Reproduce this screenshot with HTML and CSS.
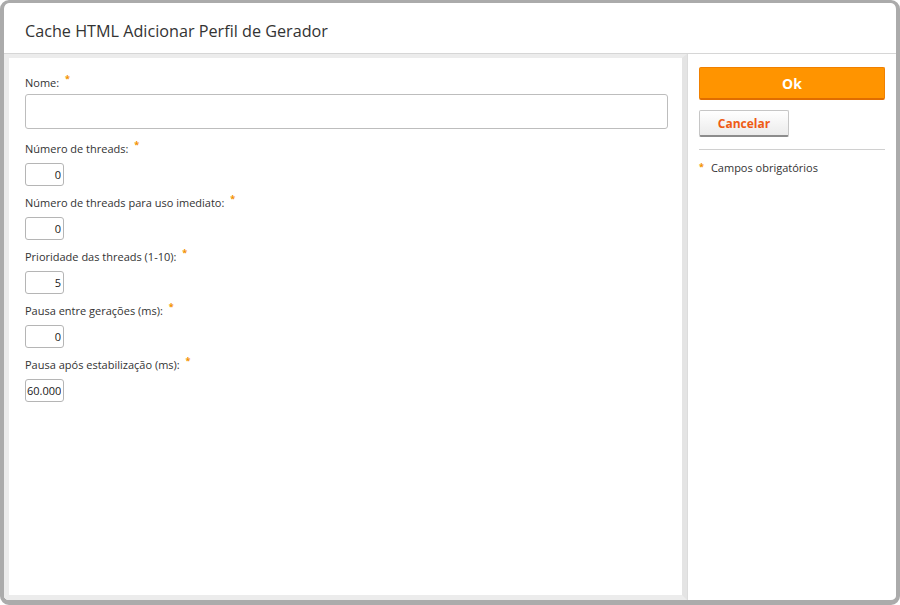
FILE: index.html
```html
<!DOCTYPE html>
<html lang="pt">
<head>
<meta charset="utf-8">
<link rel="stylesheet" href="styles.css">
</head>
<body>
<div class="frame">
  <div class="header">Cache HTML Adicionar Perfil de Gerador</div>
  <div class="main">
    <div class="form-panel">
      <div class="field field-name">
        <label class="lbl">Nome: <span class="req">*</span></label>
        <input class="inp-wide" type="text">
      </div>
      <div class="field">
        <label class="lbl">Número de threads: <span class="req">*</span></label>
        <input class="inp-num" type="text" value="0">
      </div>
      <div class="field">
        <label class="lbl">Número de threads para uso imediato: <span class="req">*</span></label>
        <input class="inp-num" type="text" value="0">
      </div>
      <div class="field">
        <label class="lbl">Prioridade das threads (1-10): <span class="req">*</span></label>
        <input class="inp-num" type="text" value="5">
      </div>
      <div class="field">
        <label class="lbl">Pausa entre gerações (ms): <span class="req">*</span></label>
        <input class="inp-num" type="text" value="0">
      </div>
      <div class="field">
        <label class="lbl">Pausa após estabilização (ms): <span class="req">*</span></label>
        <input class="inp-num" type="text" value="60.000">
      </div>
    </div>
    <div class="side">
      <button class="btn-ok">Ok</button>
      <button class="btn-cancel">Cancelar</button>
      <div class="sep"></div>
      <div class="legend"><span class="req">*</span>Campos obrigatórios</div>
    </div>
  </div>
</div>
</body>
</html>
```
FILE: styles.css
```css
* { box-sizing: border-box; }
html, body { margin: 0; padding: 0; background: #ffffff; }
body { width: 900px; height: 605px; font-family: "Open Sans", "Noto Sans", sans-serif; color: #333; }
.frame {
  width: 900px; height: 605px;
  border: solid #ababab;
  border-width: 3px 4px 5px 4px;
  border-radius: 9px;
  display: flex; flex-direction: column;
  overflow: hidden;
  background: #fff;
}
.header {
  height: 51px;
  padding: 17px 0 0 21px;
  font-size: 16.2px;
  color: #333;
  border-bottom: 1px solid #d6d6d6;
  flex: none;
}
.main { flex: 1; display: flex; min-height: 0; }
.form-panel {
  width: 683px;
  border: solid #ececec;
  border-width: 4px 5px 5px 5px;
  border-right-color: #e4e4e4;
  padding: 17px 14px 0 16px;
}
.side {
  flex: 1;
  border-left: 1px solid #dcdcdc;
  padding: 13px 10px 0 11px;
  display: flex; flex-direction: column; align-items: flex-start;
}
.field { display: flex; flex-direction: column; align-items: flex-start; margin-bottom: 9px; }
.field-name { margin-bottom: 12px; }
.lbl { font-size: 11px; line-height: 16px; margin-bottom: 5px; color: #333; }
.field-name .lbl { margin-bottom: 2px; }
.req { color: #f39200; font-size: 9px; position: relative; top: -5px; margin-left: 3px; font-weight: bold; }
.inp-wide {
  width: 643px; height: 35px;
  border: 1px solid #bdbdbd; border-radius: 3px;
  font: inherit;
}
.inp-num {
  width: 39px; height: 23px;
  border: 1px solid #b5b5b5; border-radius: 3px;
  text-align: right; padding: 0 2px 0 1px;
  font-family: "Open Sans", sans-serif; font-size: 11px; color: #1a1a1a;
}
.btn-ok {
  width: 186px; height: 33px;
  background: #ff9400;
  border: 1px solid #f08000;
  border-bottom: 2px solid #e06d00;
  border-radius: 2px;
  color: #fff; font-family: inherit; font-weight: bold; font-size: 14px;
  padding: 0;
}
.btn-cancel {
  margin-top: 10px;
  width: 90px; height: 27px;
  background: linear-gradient(#ffffff, #ebebeb);
  border: 1px solid #c6c6c6;
  border-bottom: 2px solid #8c8c8c;
  border-radius: 2px;
  color: #ef5b14; font-family: inherit; font-weight: bold; font-size: 12px;
  padding: 0;
}
.sep { width: 186px; height: 1px; background: #d0d0d0; margin-top: 12px; }
.legend { font-size: 11px; margin-top: 10px; display: flex; align-items: flex-start; line-height: 16px; }
.legend .req { margin: 0 7px 0 0; top: -1px; font-size: 9px; }
```
